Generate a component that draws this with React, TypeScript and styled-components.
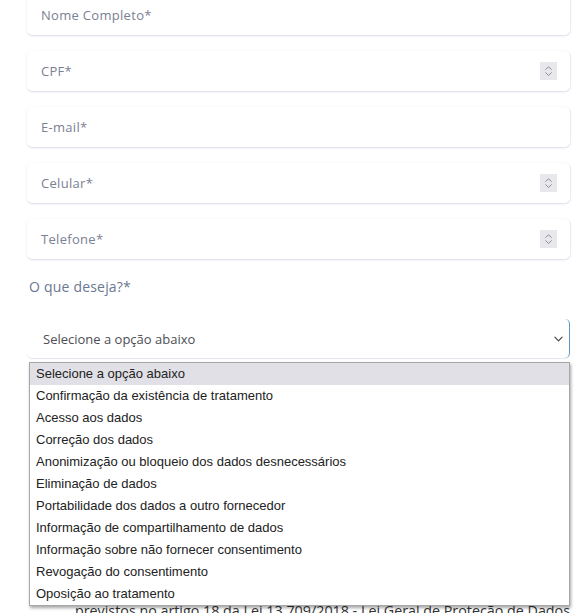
import styled, { createGlobalStyle } from 'styled-components';

const GlobalStyle = createGlobalStyle`
  html, body {
    margin: 0;
    padding: 0;
    background: #fff;
    overflow: hidden;
  }
  body {
    font-family: "Open Sans", "Liberation Sans", sans-serif;
  }
`;

const Form = styled.form`
  display: flex;
  flex-direction: column;
  padding: 0 10px 0 27px;
  margin-top: -5px;
  width: 580px;
  box-sizing: border-box;
`;

const Fields = styled.div`
  display: flex;
  flex-direction: column;
  gap: 16px;
`;

const Field = styled.div`
  display: flex;
  align-items: center;
  justify-content: space-between;
  height: 40px;
  padding: 0 14px 0 14px;
  background: #fff;
  border-radius: 5px;
  box-shadow: 0 1px 2px rgba(90, 110, 150, 0.22), 1px 0 1px rgba(90, 110, 150, 0.08);
  box-sizing: border-box;
`;

const Placeholder = styled.span`
  font-size: 13px;
  letter-spacing: 0.3px;
  color: #7b8093;
`;

const Spinner = styled.div`
  width: 17px;
  height: 18px;
  background: #e7e7ec;
  display: flex;
  flex-direction: column;
  align-items: center;
  justify-content: center;
  gap: 2px;
  margin-right: -1px;
`;

const Label = styled.label`
  margin: 18px 0 0 2px;
  font-size: 14px;
  line-height: 19px;
  letter-spacing: 0.2px;
  color: #6a7794;
`;

const SelectWrap = styled.div`
  position: relative;
  margin-top: 23px;
`;

const SelectBox = styled.div`
  display: flex;
  align-items: center;
  justify-content: space-between;
  height: 39px;
  padding: 0 6px 0 16px;
  border-radius: 5px;
  border-right: 1.5px solid #5d95c2;
  box-shadow: 0 1px 1px rgba(90, 110, 150, 0.18);
  box-sizing: border-box;
`;

const SelectText = styled.span`
  font-size: 13px;
  color: #4d4d55;
`;

const Dropdown = styled.ul`
  position: absolute;
  left: 2px;
  right: 0;
  top: 43px;
  margin: 0;
  padding: 0;
  list-style: none;
  background: #fff;
  border: 1px solid #a7a7a7;
  box-shadow: 1px 2px 3px rgba(0, 0, 0, 0.35);
  z-index: 2;
`;

const Option = styled.li<{ $active?: boolean }>`
  height: 22px;
  line-height: 22px;
  padding-left: 6px;
  font-family: "Liberation Sans", Arial, sans-serif;
  font-size: 13px;
  color: #222;
  background: ${(p) => (p.$active ? '#e1e0e6' : '#fff')};
`;

const Notice = styled.p`
  margin: 243px 0 0 48px;
  font-size: 14.3px;
  line-height: 20px;
  color: #333;
  white-space: nowrap;
`;

const Chevron = ({ up, size = 7 }: { up?: boolean; size?: number }) => (
  <svg width={size} height={size * 0.6} viewBox="0 0 10 6" fill="none">
    <path
      d={up ? 'M1 5L5 1L9 5' : 'M1 1L5 5L9 1'}
      stroke="#8a8a96"
      strokeWidth="1.4"
      strokeLinecap="round"
      strokeLinejoin="round"
    />
  </svg>
);

const fields = [
  { label: 'Nome Completo*', spin: false },
  { label: 'CPF*', spin: true },
  { label: 'E-mail*', spin: false },
  { label: 'Celular*', spin: true },
  { label: 'Telefone*', spin: true },
];

const options = [
  'Selecione a opção abaixo',
  'Confirmação da existência de tratamento',
  'Acesso aos dados',
  'Correção dos dados',
  'Anonimização ou bloqueio dos dados desnecessários',
  'Eliminação de dados',
  'Portabilidade dos dados a outro fornecedor',
  'Informação de compartilhamento de dados',
  'Informação sobre não fornecer consentimento',
  'Revogação do consentimento',
  'Oposição ao tratamento',
];

export default function App() {
  return (
    <>
      <GlobalStyle />
      <Form>
        <Fields>
          {fields.map((f) => (
            <Field key={f.label}>
              <Placeholder>{f.label}</Placeholder>
              {f.spin && (
                <Spinner>
                  <Chevron up />
                  <Chevron />
                </Spinner>
              )}
            </Field>
          ))}
        </Fields>
        <Label>O que deseja?*</Label>
        <SelectWrap>
          <SelectBox>
            <SelectText>Selecione a opção abaixo</SelectText>
            <svg width="9" height="6" viewBox="0 0 10 6" fill="none">
              <path d="M1 1L5 5L9 1" stroke="#444" strokeWidth="1.3" strokeLinecap="round" strokeLinejoin="round" />
            </svg>
          </SelectBox>
          <Dropdown>
            {options.map((o, i) => (
              <Option key={o} $active={i === 0}>
                {o}
              </Option>
            ))}
          </Dropdown>
        </SelectWrap>
        <Notice>previstos no artigo 18 da Lei 13.709/2018 - Lei Geral de Proteção de Dados</Notice>
      </Form>
    </>
  );
}
